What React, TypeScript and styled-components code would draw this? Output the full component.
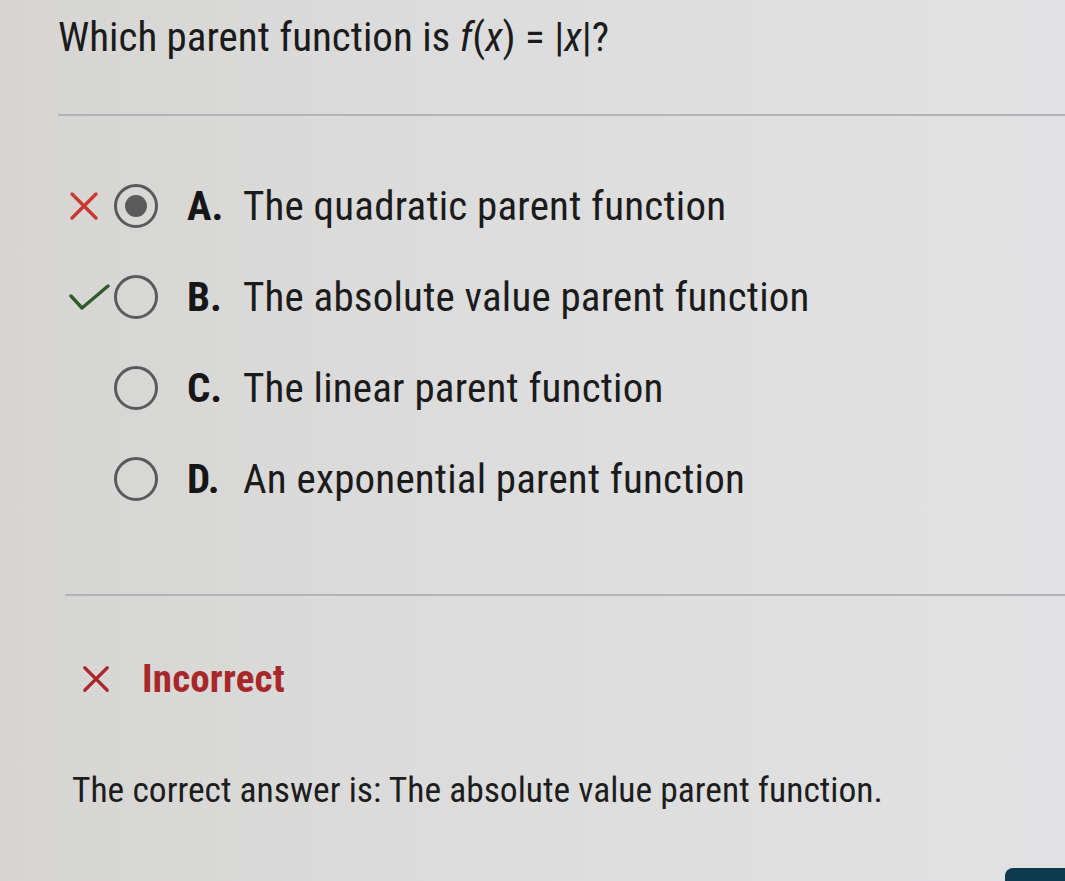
import React from 'react';
import styled, { createGlobalStyle } from 'styled-components';

const GlobalStyle = createGlobalStyle`
  html, body {
    margin: 0;
    padding: 0;
    background: #dadada;
  }
  body {
    font-family: "Roboto Condensed", "Liberation Sans Narrow", Roboto, "Liberation Sans", sans-serif;
    color: #1c1c1c;
  }
`;

type Mark = 'wrong' | 'right' | 'none';

interface Choice {
  letter: string;
  text: string;
  mark: Mark;
  selected?: boolean;
}

const choices: Choice[] = [
  { letter: 'A.', text: 'The quadratic parent function', mark: 'wrong', selected: true },
  { letter: 'B.', text: 'The absolute value parent function', mark: 'right' },
  { letter: 'C.', text: 'The linear parent function', mark: 'none' },
  { letter: 'D.', text: 'An exponential parent function', mark: 'none' },
];

const CrossIcon: React.FC<{ color: string; size: number }> = ({ color, size }) => (
  <svg width={size} height={size} viewBox="0 0 32 32">
    <path d="M4 4 L28 28 M28 4 L4 28" stroke={color} strokeWidth="3.4" strokeLinecap="round" fill="none" />
  </svg>
);

const CheckIcon: React.FC = () => (
  <svg width="42" height="28" viewBox="0 0 42 28">
    <path d="M3 13 L14 25 L40 3" stroke="#2f5a2c" strokeWidth="3.4" strokeLinecap="round" strokeLinejoin="round" fill="none" />
  </svg>
);

const App: React.FC = () => {
  return (
    <Page>
      <GlobalStyle />
      <Question>
        Which parent function is <Var>f</Var>(<Var>x</Var>) = |<Var>x</Var>|?
      </Question>
      <Divider $indent={58} $top={54} />
      <ChoiceList>
        {choices.map((c) => (
          <ChoiceRow key={c.letter}>
            <MarkSlot>
              {c.mark === 'wrong' && <CrossIcon color="#c9392f" size={32} />}
              {c.mark === 'right' && <CheckIcon />}
            </MarkSlot>
            <Radio $selected={!!c.selected} />
            <Letter>{c.letter}</Letter>
            <ChoiceText>{c.text}</ChoiceText>
          </ChoiceRow>
        ))}
      </ChoiceList>
      <Divider $indent={65} $top={70} />
      <Feedback>
        <CrossIcon color="#a8272b" size={30} />
        <FeedbackLabel>Incorrect</FeedbackLabel>
      </Feedback>
      <Answer>The correct answer is: The absolute value parent function.</Answer>
      <Footer>
        <NextButton />
      </Footer>
    </Page>
  );
};

const Page = styled.div`
  width: 1065px;
  height: 881px;
  overflow: hidden;
  display: flex;
  flex-direction: column;
  background: linear-gradient(90deg, #d6d5d3 0%, #dcdcdc 40%, #e2e2e4 100%);

  & > * {
    flex-shrink: 0;
  }
`;

const Question = styled.div`
  margin: 14px 0 0 58px;
  height: 46px;
  font-size: 41px;
  line-height: 46px;
  color: #1b1b1b;
  white-space: nowrap;
`;

const Var = styled.span`
  font-style: italic;
`;

const Divider = styled.div<{ $indent: number; $top: number }>`
  height: 2px;
  margin-top: ${(p) => p.$top}px;
  margin-left: ${(p) => p.$indent}px;
  background: #b4b4b6;
`;

const ChoiceList = styled.div`
  display: flex;
  flex-direction: column;
  padding-top: 44px;
`;

const ChoiceRow = styled.div`
  display: flex;
  align-items: center;
  height: 91px;
  padding-left: 68px;
`;

const MarkSlot = styled.div`
  width: 46px;
  display: flex;
  align-items: center;
  justify-content: flex-start;
`;

const Radio = styled.div<{ $selected: boolean }>`
  width: 38px;
  height: 38px;
  border-radius: 50%;
  border: 3px solid #5a5a5a;
  display: flex;
  align-items: center;
  justify-content: center;
  flex-shrink: 0;

  &::after {
    content: '';
    display: ${(p) => (p.$selected ? 'block' : 'none')};
    width: 22px;
    height: 22px;
    border-radius: 50%;
    background: #5b5b5b;
  }
`;

const Letter = styled.span`
  margin-left: 29px;
  width: 56px;
  font-size: 41px;
  font-weight: 700;
  color: #161616;
`;

const ChoiceText = styled.span`
  font-size: 41px;
  letter-spacing: 0.2px;
  color: #1b1b1b;
  white-space: nowrap;
`;

const Feedback = styled.div`
  display: flex;
  align-items: center;
  gap: 31px;
  margin: 65px 0 0 81px;
  height: 36px;
`;

const FeedbackLabel = styled.span`
  font-size: 39px;
  font-weight: 700;
  color: #a8272b;
  letter-spacing: 0.2px;
`;

const Answer = styled.div`
  margin: 75px 0 0 72px;
  font-size: 35.5px;
  line-height: 36px;
  color: #1d1d1d;
  white-space: nowrap;
`;

const Footer = styled.div`
  display: flex;
  justify-content: flex-end;
  margin-top: auto;
`;

const NextButton = styled.div`
  width: 60px;
  height: 13px;
  background: #0e3a4e;
  border-top-left-radius: 8px;
`;

export default App;
